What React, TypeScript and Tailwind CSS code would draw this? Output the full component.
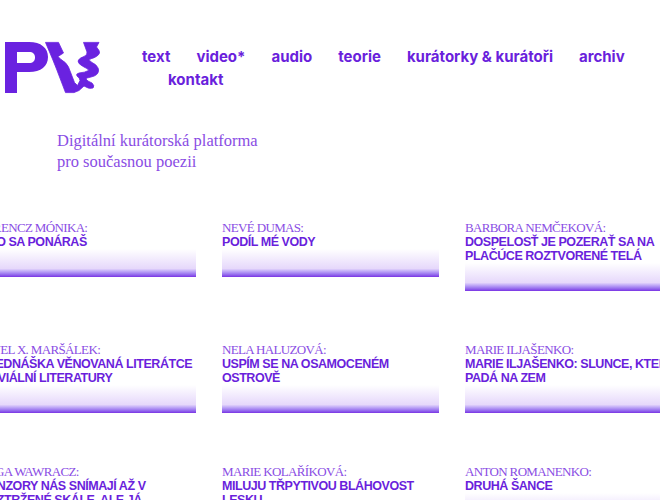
const navTop = ['text', 'video*', 'audio', 'teorie', 'kurátorky & kurátoři', 'archiv']

const rows = [
  [
    { author: 'FERENCZ MÓNIKA:', title: 'AKO SA PONÁRAŠ' },
    { author: 'NEVÉ DUMAS:', title: 'PODÍL MÉ VODY' },
    { author: 'BARBORA NEMČEKOVÁ:', title: 'DOSPELOSŤ JE POZERAŤ SA NA PLAČÚCE ROZTVORENÉ TELÁ' },
  ],
  [
    { author: 'PAVEL X. MARŠÁLEK:', title: 'PŘEDNÁŠKA VĚNOVANÁ LITERÁTCE TRIVIÁLNÍ LITERATURY' },
    { author: 'NELA HALUZOVÁ:', title: 'USPÍM SE NA OSAMOCENÉM OSTROVĚ' },
    { author: 'MARIE ILJAŠENKO:', title: 'MARIE ILJAŠENKO: SLUNCE, KTERÉ PADÁ NA ZEM' },
  ],
  [
    { author: 'OLGA WAWRACZ:', title: 'KONZORY NÁS SNÍMAJÍ AŽ V ROZTRŽENÉ SKÁLE, ALE JÁ' },
    { author: 'MARIE KOLAŘÍKOVÁ:', title: 'MILUJU TŘPYTIVOU BLÁHOVOST LESKU' },
    { author: 'ANTON ROMANENKO:', title: 'DRUHÁ ŠANCE' },
  ],
]

function Logo() {
  return (
    <svg viewBox="0 0 105 57" className="w-[105px] h-[57px] shrink-0 fill-[#6a22e0]">
      <path
        fillRule="evenodd"
        d="M5 5 H29 C41 5 48 11 48 20 C48 29 41 35 29 35 H17 V56 H5 Z M17 15 V26 H29 C33 26 35 24 35 20.5 C35 17 33 15 29 15 Z"
      />
      <path
        className="stroke-[#6a22e0]"
        strokeWidth="0.8"
        strokeLinejoin="round"
        d="M45.5 5.4 L58.5 5.4 L63.5 16 L58 19.5 L61 22.5 Q66 25 68.5 30 L74.5 45.5 L77.5 48.5 L80 43.5 Q80 41 77 39 Q75.5 37 79 36 Q85 35.5 88.5 33.5 Q89 32 84 30 Q78 27 78 24 Q79 21 84 19.5 Q87.5 18 87 15 L83.5 5.4 L99 5.4 L96.5 10 Q100 14 99.5 16 Q98 20 90 22 Q88 23 92 25.5 Q99 29 98.5 34 Q98 38.5 91 40 Q86 41 86 42 Q87 44 92 46 Q95 49 93 51 Q89 52.5 84 49 L79 53.5 L74 55.6 L65.5 55.6 L56.5 32 L52.5 22 Z"
      />
    </svg>
  )
}

export default function App() {
  return (
    <div className="w-[660px] h-[500px] overflow-hidden bg-white text-[#6a1fdc] font-['Liberation_Sans',sans-serif]">
      {/* Header */}
      <div className="flex pt-[37px]">
        <Logo />
        <nav className="pl-[37px] pt-[8px] text-[15px] font-bold leading-[23px] font-['Inter',sans-serif]">
          <div className="flex gap-[26px] whitespace-nowrap">
            {navTop.map(item => (
              <a key={item}>{item}</a>
            ))}
          </div>
          <div className="pl-[26px]">
            <a>kontakt</a>
          </div>
        </nav>
      </div>

      {/* Tagline */}
      <p className="pl-[57px] pt-[36px] text-[16.5px] leading-[21px] text-[#8a4de4] font-['Liberation_Serif',serif]">
        Digitální kurátorská platforma
        <br />
        pro současnou poezii
      </p>

      {/* Cards */}
      <div className="-ml-[21px] mt-[49px] grid w-[703px] grid-cols-3 items-start gap-x-[26px] gap-y-[52px]">
        {rows.flat().map(card => (
          <div key={card.author} className="min-w-0">
            <p className="text-[13px] tracking-[-0.65px] leading-[14px] text-[#8a4de4] font-['Liberation_Serif',serif] whitespace-nowrap">
              {card.author}
            </p>
            <h3 className="text-[12.5px] tracking-[-0.45px] font-bold leading-[14px]">{card.title}</h3>
            <div className="h-[28px] bg-gradient-to-b from-white via-[#e6d8fb] via-70% to-[#7a30e4]" />
          </div>
        ))}
      </div>
    </div>
  )
}
